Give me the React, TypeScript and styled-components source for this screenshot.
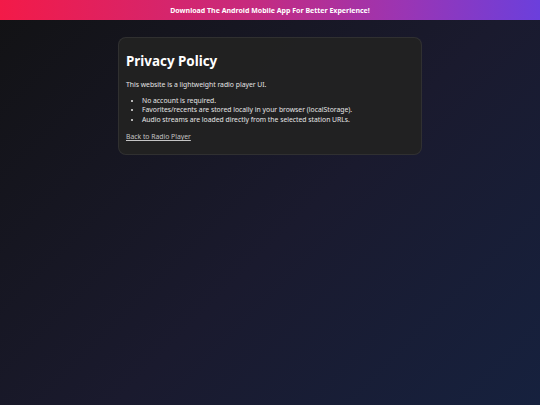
import styled, { createGlobalStyle } from "styled-components";

const GlobalStyle = createGlobalStyle`
    html, body {
        margin: 0;
        padding: 0;
        min-height: 100%;
    }
    body {
        font-family: "Noto Sans", "Open Sans", sans-serif;
        color: #e6e6e6;
        background: linear-gradient(135deg, #121214 0%, #1a1a2e 55%, #16213e 100%);
        min-height: 405px;
    }
`;

const Page = styled.div`
    min-height: 405px;
    display: flex;
    flex-direction: column;
`;

const Banner = styled.div`
    height: 20px;
    display: flex;
    align-items: center;
    justify-content: center;
    background: linear-gradient(90deg, #f31a48 0%, #c82a7c 45%, #9a35b4 75%, #6b3fdc 100%);
    color: #fff;
    font-size: 7px;
    font-weight: 700;
`;

const Card = styled.main`
    width: 304px;
    box-sizing: border-box;
    margin: 17px auto 0;
    padding: 15px 7px 13px;
    background: rgba(34, 34, 34, 0.95);
    border: 1px solid rgba(255, 255, 255, 0.07);
    border-radius: 8px;
    font-size: 6.8px;
    line-height: 1.35;
`;

const Title = styled.h1`
    margin: 0 0 11px;
    font-size: 13.4px;
    font-weight: 700;
    color: #fff;
    line-height: 1.2;
`;

const Text = styled.p`
    margin: 0 0 7px;
`;

const List = styled.ul`
    margin: 0 0 8.5px;
    padding-left: 16px;

    li {
        margin: 0;
    }
`;

const BackLink = styled.a`
    color: #c4c4c4;
    text-decoration: underline;
`;

export default function App() {
    return (
        <Page>
            <GlobalStyle />
            <Banner>Download The Android Mobile App For Better Experience!</Banner>
            <Card>
                <Title>Privacy Policy</Title>
                <Text>This website is a lightweight radio player UI.</Text>
                <List>
                    <li>No account is required.</li>
                    <li>Favorites/recents are stored locally in your browser (localStorage).</li>
                    <li>Audio streams are loaded directly from the selected station URLs.</li>
                </List>
                <BackLink href="#">Back to Radio Player</BackLink>
            </Card>
        </Page>
    );
}
